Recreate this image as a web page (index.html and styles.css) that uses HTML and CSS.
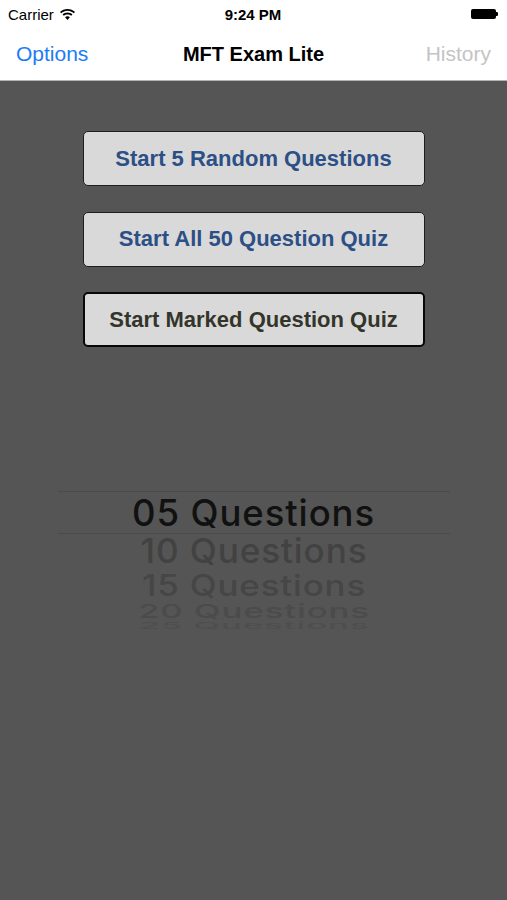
FILE: index.html
```html
<!DOCTYPE html>
<html lang="en">
<head>
<meta charset="UTF-8" />
<title>MFT Exam Lite</title>
<link rel="stylesheet" href="styles.css">
</head>
<body>
<div id="phone">
    <!-- status bar -->
    <div class="status">
        <div class="status-left">
            <span>Carrier</span>
            <svg class="wifi" width="15" height="11" viewBox="0 0 15 11">
                <path d="M7.5 0C4.6 0 2 1.1 0 2.9l1.2 1.3C2.9 2.7 5.1 1.8 7.5 1.8s4.6 0.9 6.3 2.4L15 2.9C13 1.1 10.4 0 7.5 0z" fill="#000"/>
                <path d="M7.5 3.6c-1.9 0-3.6 0.7-4.9 1.9l1.2 1.3c1-0.9 2.3-1.4 3.7-1.4s2.7 0.5 3.7 1.4l1.2-1.3C11.1 4.3 9.4 3.6 7.5 3.6z" fill="#000"/>
                <path d="M7.5 7.2c-0.9 0-1.8 0.4-2.4 1L7.5 11l2.4-2.8C9.3 7.6 8.4 7.2 7.5 7.2z" fill="#000"/>
            </svg>
        </div>
        <div class="status-time">9:24 PM</div>
        <div class="status-right">
            <div class="battery"></div>
            <div class="battery-tip"></div>
        </div>
    </div>

    <!-- nav bar -->
    <div class="navbar">
        <div class="nav-left">Options</div>
        <div class="nav-title">MFT Exam Lite</div>
        <div class="nav-right">History</div>
    </div>

    <div id="main">
        <div class="buttons">
            <div class="btn blue">Start 5 Random Questions</div>
            <div class="btn blue">Start All 50 Question Quiz</div>
            <div class="btn dark">Start Marked Question Quiz</div>
        </div>

        <!-- picker -->
        <div class="picker">
            <div class="row sel">05 Questions</div>
            <div class="row r1">10 Questions</div>
            <div class="row r2">15 Questions</div>
            <div class="row r3">20 Questions</div>
            <div class="row r4">25 Questions</div>
        </div>
    </div>
</div>
</body>
</html>
```

FILE: styles.css
```css
body{
    margin: 0;
    font-family: "Liberation Sans", Arial, sans-serif;
    background: #555555;
}

#phone{
    width: 507px;
    height: 900px;
    display: flex;
    flex-direction: column;
    overflow: hidden;
}

.status{
    height: 28px;
    background: #fff;
    display: flex;
    align-items: center;
    justify-content: space-between;
    padding: 0 9px 0 8px;
    font-size: 15px;
    color: #000;
}

.status-left{
    width: 120px;
    display: flex;
    align-items: center;
    gap: 6px;
}

.status-time{
    font-weight: bold;
}

.status-right{
    width: 120px;
    display: flex;
    justify-content: flex-end;
    align-items: center;
}

.battery{
    width: 25px;
    height: 10px;
    border-radius: 2px;
    background: #000;
}

.battery-tip{
    width: 2px;
    height: 4px;
    background: #000;
    border-radius: 0 1px 1px 0;
}

.navbar{
    height: 52px;
    background: #fff;
    border-bottom: 1px solid #b4b4b4;
    display: flex;
    align-items: center;
    justify-content: space-between;
    padding: 0 16px;
    font-size: 21px;
}

.nav-left{
    color: #1a7cf6;
    width: 110px;
}

.nav-title{
    font-weight: bold;
    font-size: 20px;
    color: #000;
}

.nav-right{
    color: #c4c4c4;
    width: 110px;
    text-align: right;
}

#main{
    flex: 1;
    background: #555555;
    display: flex;
    flex-direction: column;
    align-items: center;
}

.buttons{
    margin-top: 50px;
    display: flex;
    flex-direction: column;
    gap: 25.5px;
}

.btn{
    width: 342px;
    height: 55px;
    box-sizing: border-box;
    background: #d9d9d9;
    border: 1px solid #1e1e1e;
    border-radius: 5px;
    display: flex;
    align-items: center;
    justify-content: center;
    font-weight: bold;
    font-size: 22px;
}

.blue{
    color: #2c4f86;
}

.dark{
    color: #34352a;
    border: 2px solid #080808;
}

/* picker wheel */
.picker{
    margin-top: 144px;
    width: 392px;
    display: flex;
    flex-direction: column;
    align-items: stretch;
    font-family: Inter, "DejaVu Sans", sans-serif;
    font-weight: 500;
}

.row{
    font-size: 36.5px;
    line-height: 36.5px;
    letter-spacing: 0.9px;
    white-space: nowrap;
    text-align: center;
    transform-origin: 50% 31.5px;
}

.sel{
    height: 41px;
    line-height: 42px;
    border-top: 1px solid #4a4a4a;
    border-bottom: 1px solid #4a4a4a;
    color: #111111;
}

.r1{
    color: #424242;
    height: 33.4px;
    margin-top: -2.5px;
    transform: scale(0.963, 0.93);
}

.r2{
    color: #464646;
    height: 22.4px;
    transform: scale(0.955, 0.81);
}

.r3{
    color: #4b4b4b;
    height: 11px;
    transform: scale(0.955, 0.52);
}

.r4{
    color: #4e4e4e;
    height: 10px;
    transform: scale(0.955, 0.26);
}
```
